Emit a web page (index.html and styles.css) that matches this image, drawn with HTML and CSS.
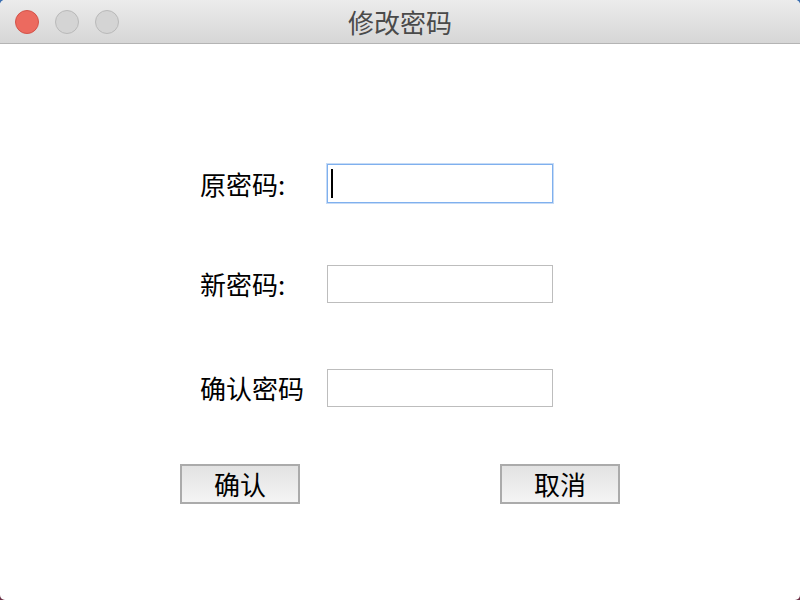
FILE: index.html
```html
<!DOCTYPE html>
<html lang="zh">
<head>
<meta charset="utf-8">
<title>修改密码</title>
<link rel="stylesheet" href="styles.css">
</head>
<body>
<div class="window">
  <div class="titlebar">
    <div class="lights">
      <span class="light red"></span>
      <span class="light"></span>
      <span class="light"></span>
    </div>
    <div class="title">修改密码</div>
  </div>
  <div class="content">
    <div class="row r1">
      <label class="label">原密码:</label>
      <div class="input focus"><span class="caret"></span></div>
    </div>
    <div class="row r2">
      <label class="label">新密码:</label>
      <div class="input"></div>
    </div>
    <div class="row r3">
      <label class="label">确认密码</label>
      <div class="input"></div>
    </div>
    <div class="buttons">
      <button class="btn">确认</button>
      <button class="btn">取消</button>
    </div>
  </div>
</div>
</body>
</html>
```
FILE: styles.css
```css
html, body {
  margin: 0;
  padding: 0;
  width: 800px;
  height: 600px;
  overflow: hidden;
  background: linear-gradient(#3b6fb0, #6a2f45);
}
body {
  font-family: "Noto Sans CJK SC", "Noto Sans", sans-serif;
}
.window {
  width: 800px;
  height: 600px;
  background: #ffffff;
  border-radius: 5px;
  overflow: hidden;
  display: flex;
  flex-direction: column;
}
.titlebar {
  height: 43px;
  border-bottom: 1px solid #b4b4b4;
  background: linear-gradient(#ececec, #d6d6d6);
  display: flex;
  align-items: center;
  position: relative;
}
.lights {
  display: flex;
  gap: 16px;
  padding-left: 15px;
}
.light {
  width: 22px;
  height: 22px;
  border-radius: 50%;
  background: #d4d4d4;
  border: 1px solid #b9b9b9;
}
.light.red {
  background: #ec6a5f;
  border-color: #d35349;
}
.title {
  position: absolute;
  left: 0;
  right: 0;
  top: 0;
  height: 43px;
  line-height: 43px;
  text-align: center;
  font-size: 26px;
  color: #4a4a4a;
  pointer-events: none;
}
.content {
  display: flex;
  flex-direction: column;
  padding-top: 120px;
}
.row {
  display: flex;
  align-items: center;
  padding-left: 200px;
}
.r2 { margin-top: 62px; }
.r3 { margin-top: 66px; }
.label {
  width: 127px;
  font-size: 26px;
  line-height: 32px;
  color: #000;
}
.input {
  box-sizing: border-box;
  width: 226px;
  height: 38px;
  border: 1px solid #bdbdbd;
  background: #fff;
  display: flex;
  align-items: center;
}
.input.focus {
  height: 39px;
  border: 1px solid #7fb0ee;
  box-shadow: 0 0 0 1px #c6dbf6;
  padding-left: 3px;
}
.caret {
  width: 2px;
  height: 29px;
  background: #000;
}
.buttons {
  display: flex;
  justify-content: space-between;
  padding: 0 180px;
  margin-top: 57px;
}
.btn {
  box-sizing: border-box;
  width: 120px;
  height: 40px;
  border: 2px solid #ababab;
  background: linear-gradient(#e2e2e2, #f4f4f4);
  font-family: "Noto Sans CJK SC", "Noto Sans", sans-serif;
  font-size: 26px;
  line-height: 34px;
  padding: 0;
  color: #000;
}
```
